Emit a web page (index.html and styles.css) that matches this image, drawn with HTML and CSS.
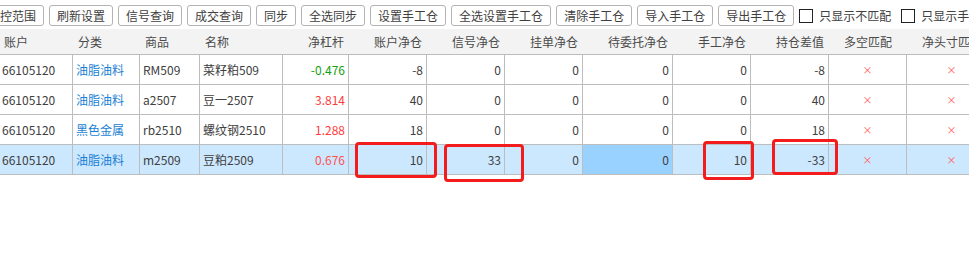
FILE: index.html
```html
<!DOCTYPE html>
<html lang="zh-CN">
<head>
  <meta charset="UTF-8">
  <title>持仓对比</title>
  <link rel="stylesheet" href="styles.css">
</head>
<body>
  <div class="page">
    <div class="toolbar">
      <button class="btn">风控范围</button>
      <button class="btn">刷新设置</button>
      <button class="btn">信号查询</button>
      <button class="btn">成交查询</button>
      <button class="btn">同步</button>
      <button class="btn">全选同步</button>
      <button class="btn">设置手工仓</button>
      <button class="btn">全选设置手工仓</button>
      <button class="btn">清除手工仓</button>
      <button class="btn">导入手工仓</button>
      <button class="btn">导出手工仓</button>
      <label class="check"><span class="box"></span>只显示不匹配</label>
      <label class="check"><span class="box"></span>只显示手工仓</label>
    </div>

    <div class="grid">
      <div class="row head">
        <div class="cell">账户</div>
        <div class="cell">分类</div>
        <div class="cell">商品</div>
        <div class="cell">名称</div>
        <div class="cell num">净杠杆</div>
        <div class="cell num">账户净仓</div>
        <div class="cell num">信号净仓</div>
        <div class="cell num">挂单净仓</div>
        <div class="cell num">待委托净仓</div>
        <div class="cell num">手工净仓</div>
        <div class="cell num">持仓差值</div>
        <div class="cell mid">多空匹配</div>
        <div class="cell mid">净头寸匹配</div>
      </div>

      <div class="row">
        <div class="cell">66105120</div>
        <div class="cell link">油脂油料</div>
        <div class="cell">RM509</div>
        <div class="cell">菜籽粕509</div>
        <div class="cell num up">-0.476</div>
        <div class="cell num">-8</div>
        <div class="cell num">0</div>
        <div class="cell num">0</div>
        <div class="cell num">0</div>
        <div class="cell num">0</div>
        <div class="cell num">-8</div>
        <div class="cell mid bad">×</div>
        <div class="cell mid bad">×</div>
      </div>

      <div class="row">
        <div class="cell">66105120</div>
        <div class="cell link">油脂油料</div>
        <div class="cell">a2507</div>
        <div class="cell">豆一2507</div>
        <div class="cell num down">3.814</div>
        <div class="cell num">40</div>
        <div class="cell num">0</div>
        <div class="cell num">0</div>
        <div class="cell num">0</div>
        <div class="cell num">0</div>
        <div class="cell num">40</div>
        <div class="cell mid bad">×</div>
        <div class="cell mid bad">×</div>
      </div>

      <div class="row">
        <div class="cell">66105120</div>
        <div class="cell link">黑色金属</div>
        <div class="cell">rb2510</div>
        <div class="cell">螺纹钢2510</div>
        <div class="cell num down">1.288</div>
        <div class="cell num">18</div>
        <div class="cell num">0</div>
        <div class="cell num">0</div>
        <div class="cell num">0</div>
        <div class="cell num">0</div>
        <div class="cell num">18</div>
        <div class="cell mid bad">×</div>
        <div class="cell mid bad">×</div>
      </div>

      <div class="row selected">
        <div class="cell">66105120</div>
        <div class="cell link">油脂油料</div>
        <div class="cell">m2509</div>
        <div class="cell">豆粕2509</div>
        <div class="cell num down">0.676</div>
        <div class="cell num">10</div>
        <div class="cell num">33</div>
        <div class="cell num">0</div>
        <div class="cell num focus">0</div>
        <div class="cell num">10</div>
        <div class="cell num">-33</div>
        <div class="cell mid bad">×</div>
        <div class="cell mid bad">×</div>
      </div>
    </div>

    <!-- 标注框 -->
    <div class="mark mark-1"></div>
    <div class="mark mark-2"></div>
    <div class="mark mark-3"></div>
    <div class="mark mark-4"></div>
  </div>
</body>
</html>
```

FILE: styles.css
```css
/* styles.css */

html, body {
  margin: 0;
  overflow: hidden;
  background-color: #fff;
}

body {
  font-family: "Noto Sans CJK SC", "Noto Sans", sans-serif;
  font-size: 12px;
  color: #404040;
}

.page {
  position: relative;
  width: 969px;
  height: 260px;
  overflow: hidden;
}

.toolbar {
  display: flex;
  align-items: center;
  gap: 5px;
  height: 27px;
  padding-top: 2px;
  margin-left: -20px;
  white-space: nowrap;
}

.btn {
  flex: none;
  height: 21px;
  padding: 0 7px;
  border: 1px solid #b3b3b3;
  border-radius: 3px;
  background-color: #fff;
  font-family: inherit;
  font-size: 12px;
  line-height: 19px;
  color: #404040;
}

.check {
  display: flex;
  align-items: center;
  gap: 6px;
  margin-right: 5px;
}

.box {
  width: 12px;
  height: 12px;
  border: 1px solid #222;
  background-color: #fff;
}

.grid {
  margin-left: -1px;
  width: 998px;
}

.row {
  display: grid;
  grid-template-columns: 74px 67px 60px 83px 66px 78px 78px 78px 90px 78px 78px 78px 90px;
  height: 30px;
  border-bottom: 1px solid #bdbdbd;
  box-sizing: border-box;
}

.cell {
  padding: 0 3px;
  line-height: 29px;
  border-right: 1px solid #bdbdbd;
  overflow: hidden;
  white-space: nowrap;
}

.head {
  height: 26px;
  background-color: #f3f3f3;
  color: #4a4a4a;
}

.head .cell {
  line-height: 25px;
  padding: 0 5px;
  border-right: none;
}

.num {
  text-align: right;
}

.mid {
  text-align: center;
}

.link {
  color: #1a7fd4;
}

.up {
  color: #13a113;
}

.down {
  color: #ff3b3b;
}

.bad {
  color: #ff5c5c;
  font-size: 10px;
}

.selected {
  background-color: #cce8ff;
}

.selected .down {
  color: #ff5252;
}

.focus {
  background-color: #99d1ff;
}

.mark {
  position: absolute;
  border: 3px solid #f21c1c;
  border-radius: 4px;
  box-sizing: border-box;
}

.mark-1 {
  left: 355px;
  top: 142px;
  width: 82px;
  height: 36px;
}

.mark-2 {
  left: 444px;
  top: 144px;
  width: 80px;
  height: 38px;
}

.mark-3 {
  left: 703px;
  top: 141px;
  width: 51px;
  height: 39px;
}

.mark-4 {
  left: 772px;
  top: 139px;
  width: 66px;
  height: 36px;
}
```
